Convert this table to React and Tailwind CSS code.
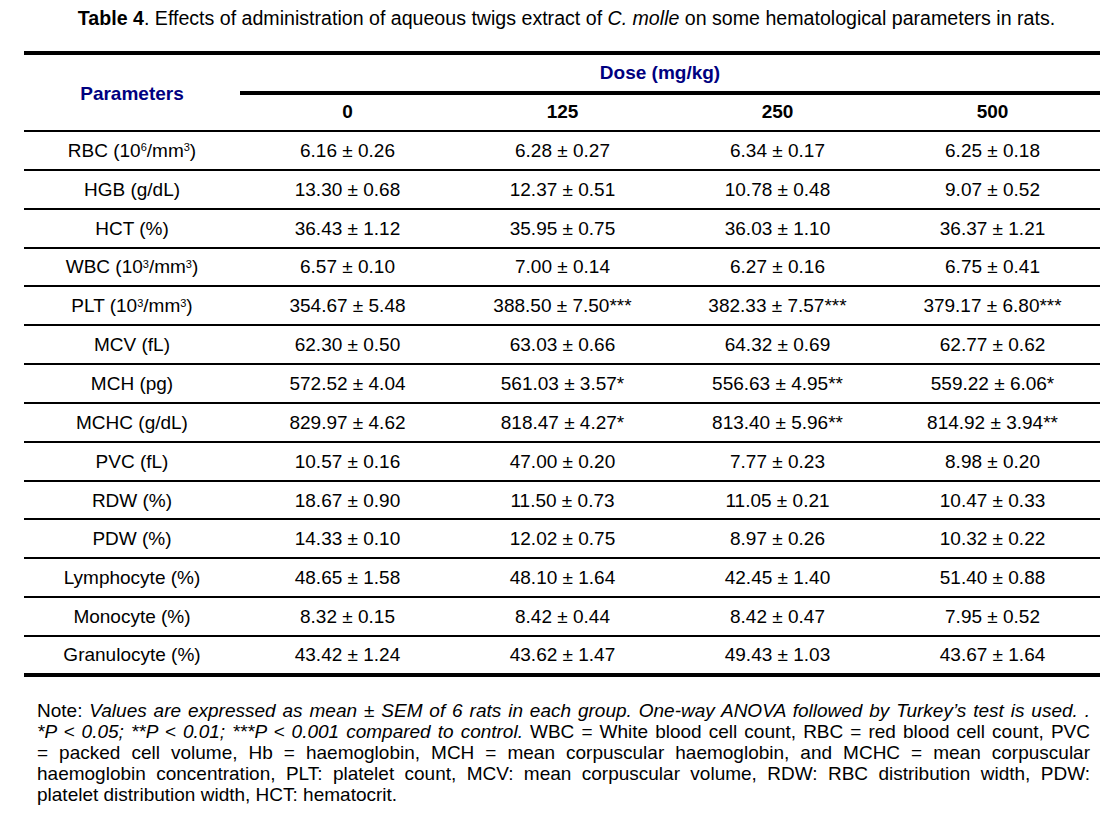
import React from "react";

const ROWS = [
  [<>RBC (10<sup className="text-[11px]">6</sup>/mm<sup className="text-[11px]">3</sup>)</>, "6.16 ± 0.26", "6.28 ± 0.27", "6.34 ± 0.17", "6.25 ± 0.18"],
  ["HGB (g/dL)", "13.30 ± 0.68", "12.37 ± 0.51", "10.78 ± 0.48", "9.07 ± 0.52"],
  ["HCT (%)", "36.43 ± 1.12", "35.95 ± 0.75", "36.03 ± 1.10", "36.37 ± 1.21"],
  [<>WBC (10<sup className="text-[11px]">3</sup>/mm<sup className="text-[11px]">3</sup>)</>, "6.57 ± 0.10", "7.00 ± 0.14", "6.27 ± 0.16", "6.75 ± 0.41"],
  [<>PLT (10<sup className="text-[11px]">3</sup>/mm<sup className="text-[11px]">3</sup>)</>, "354.67 ± 5.48", "388.50 ± 7.50***", "382.33 ± 7.57***", "379.17 ± 6.80***"],
  ["MCV (fL)", "62.30 ± 0.50", "63.03 ± 0.66", "64.32 ± 0.69", "62.77 ± 0.62"],
  ["MCH (pg)", "572.52 ± 4.04", "561.03 ± 3.57*", "556.63 ± 4.95**", "559.22 ± 6.06*"],
  ["MCHC (g/dL)", "829.97 ± 4.62", "818.47 ± 4.27*", "813.40 ± 5.96**", "814.92 ± 3.94**"],
  ["PVC (fL)", "10.57 ± 0.16", "47.00 ± 0.20", "7.77 ± 0.23", "8.98 ± 0.20"],
  ["RDW (%)", "18.67 ± 0.90", "11.50 ± 0.73", "11.05 ± 0.21", "10.47 ± 0.33"],
  ["PDW (%)", "14.33 ± 0.10", "12.02 ± 0.75", "8.97 ± 0.26", "10.32 ± 0.22"],
  ["Lymphocyte (%)", "48.65 ± 1.58", "48.10 ± 1.64", "42.45 ± 1.40", "51.40 ± 0.88"],
  ["Monocyte (%)", "8.32 ± 0.15", "8.42 ± 0.44", "8.42 ± 0.47", "7.95 ± 0.52"],
  ["Granulocyte (%)", "43.42 ± 1.24", "43.62 ± 1.47", "49.43 ± 1.03", "43.67 ± 1.64"],
];

const DOSES = ["0", "125", "250", "500"];

// justified lines of the note, broken as in the printed table
const justify = "block text-justify [text-align-last:justify]";

export default function App() {
  return (
    <div className="min-h-screen w-[1113px] bg-white text-black" style={{ fontFamily: "'Liberation Sans', Arial, sans-serif" }}>
      <p className="pt-[7px] text-center text-[19.6px] leading-[22px] pl-5">
        <b>Table 4</b>. Effects of administration of aqueous twigs extract of <i>C. molle</i> on some hematological parameters in rats.
      </p>

      <table className="mt-[22px] ml-[24px] w-[1076px] border-collapse text-[19px] table-fixed">
        <colgroup>
          <col className="w-[216px]" />
          <col className="w-[215px]" />
          <col className="w-[215px]" />
          <col className="w-[215px]" />
          <col className="w-[215px]" />
        </colgroup>
        <thead>
          <tr className="border-t-4 border-black">
            <th rowSpan={2} className="align-middle font-bold text-[#000080] border-b-2 border-black pt-1">
              Parameters
            </th>
            <th colSpan={4} className="h-[40px] border-b-4 border-black font-bold text-[#000080] pr-5 align-middle">
              Dose (mg/kg)
            </th>
          </tr>
          <tr className="border-b-2 border-black">
            {DOSES.map((d) => (
              <th key={d} className="h-[38px] font-bold align-middle">{d}</th>
            ))}
          </tr>
        </thead>
        <tbody>
          {ROWS.map((r, i) => (
            <tr
              key={i}
              className={i === ROWS.length - 1 ? "border-b-4 border-black" : "border-b-2 border-black"}
            >
              {r.map((c, j) => (
                <td key={j} className="h-[38.85px] text-center align-middle leading-none">{c}</td>
              ))}
            </tr>
          ))}
        </tbody>
      </table>

      <div className="mt-[23px] ml-[37px] w-[1053px] text-[19px] leading-[21px]">
        <span className={justify}>
          Note: <i>Values are expressed as mean ± SEM of 6 rats in each group. One-way ANOVA followed by Turkey’s test is used. .</i>
        </span>
        <span className={justify}>
          <i>*P &lt; 0.05; **P &lt; 0.01; ***P &lt; 0.001 compared to control.</i> WBC = White blood cell count, RBC = red blood cell count, PVC
        </span>
        <span className={justify}>
          = packed cell volume, Hb = haemoglobin, MCH = mean corpuscular haemoglobin, and MCHC = mean corpuscular
        </span>
        <span className={justify}>
          haemoglobin concentration, PLT: platelet count, MCV: mean corpuscular volume, RDW: RBC distribution width, PDW:
        </span>
        <span className="block">platelet distribution width, HCT: hematocrit.</span>
      </div>
    </div>
  );
}
